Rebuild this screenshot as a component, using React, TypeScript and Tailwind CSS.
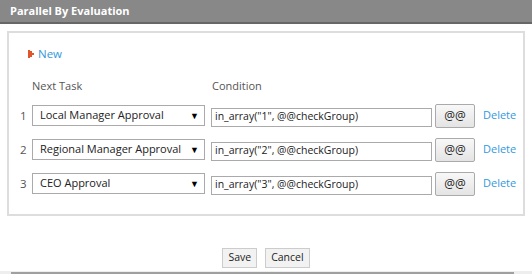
import React from "react";

const rows = [
  { task: "Local Manager Approval", cond: 'in_array("1", @@checkGroup)' },
  { task: "Regional Manager Approval", cond: 'in_array("2", @@checkGroup)' },
  { task: "CEO Approval", cond: 'in_array("3", @@checkGroup)' },
];

export default function App() {
  return (
    <div className="relative w-[532px] h-[274px] bg-white overflow-hidden font-['Open_Sans',sans-serif] text-[11px] text-[#333]">
      {/* Header */}
      <div className="h-[24px] bg-[#888888] border-b-2 border-[#666666] flex items-center px-[10px]">
        <span className="text-white font-bold text-[11px]">Parallel By Evaluation</span>
      </div>

      {/* Panel */}
      <div className="mx-[7px] mt-[7px] h-[185px] border-2 border-[#dddddd] pl-[19px] pt-[13px]">
        <div className="flex items-center gap-[4px] h-[16px]">
          <svg width="6" height="8" viewBox="0 0 6 8">
            <path d="M0 0h2v8H0z M2 1h2v6H2z M4 3h2v2H4z" fill="#e0552b" />
          </svg>
          <span className="text-[#3399dd] text-[11.5px]">New</span>
        </div>

        <div className="flex mt-[16px] h-[16px] items-center text-[#555] text-[11px] ml-[4px]">
          <span className="w-[180px]">Next Task</span>
          <span>Condition</span>
        </div>

        <div className="mt-[11px] flex flex-col gap-[13px]">
          {rows.map((r, i) => (
            <div key={i} className="flex items-center h-[21px] -ml-[8px]">
              <span className="w-[12px] text-[#555] text-[11.5px]">{i + 1}</span>
              <div className="w-[173px] h-[21px] border border-[#aaaaaa] flex items-center justify-between pl-[7px] pr-[5px] text-[#222] text-[11px]">
                <span className="whitespace-nowrap">{r.task}</span>
                <span className="shrink-0 text-[9px] text-black">▼</span>
              </div>
              <div className="ml-[6px] w-[221px] h-[19px] mt-[3px] border border-[#aaaaaa] flex items-center pl-[3px] text-[#222] text-[10.5px] whitespace-nowrap">
                {r.cond}
              </div>
              <div className="ml-[3px] w-[40px] h-[24px] border border-[#aaaaaa] rounded-[2px] bg-gradient-to-b from-[#f8f8f8] to-[#e4e4e4] flex items-center justify-center text-[12px] text-[#222]">
                @@
              </div>
              <span className="ml-[8px] text-[#3399dd]">Delete</span>
            </div>
          ))}
        </div>
      </div>

      {/* Footer buttons */}
      <div className="flex justify-center gap-[8px] mt-[32px]">
        <div className="h-[20px] px-[5px] border border-[#cccccc] bg-[#f2f2f2] flex items-center text-[10.5px] text-[#222]">Save</div>
        <div className="h-[20px] px-[5px] border border-[#cccccc] bg-[#f2f2f2] flex items-center text-[10.5px] text-[#222]">Cancel</div>
      </div>

      {/* scrollbar */}
      <div className="absolute bottom-0 left-0 w-full h-[3px] bg-[#eeeeee]">
        <div className="ml-[11px] w-[503px] h-[2px] mt-[1px] bg-[#a0a0a0]" />
      </div>
    </div>
  );
}
